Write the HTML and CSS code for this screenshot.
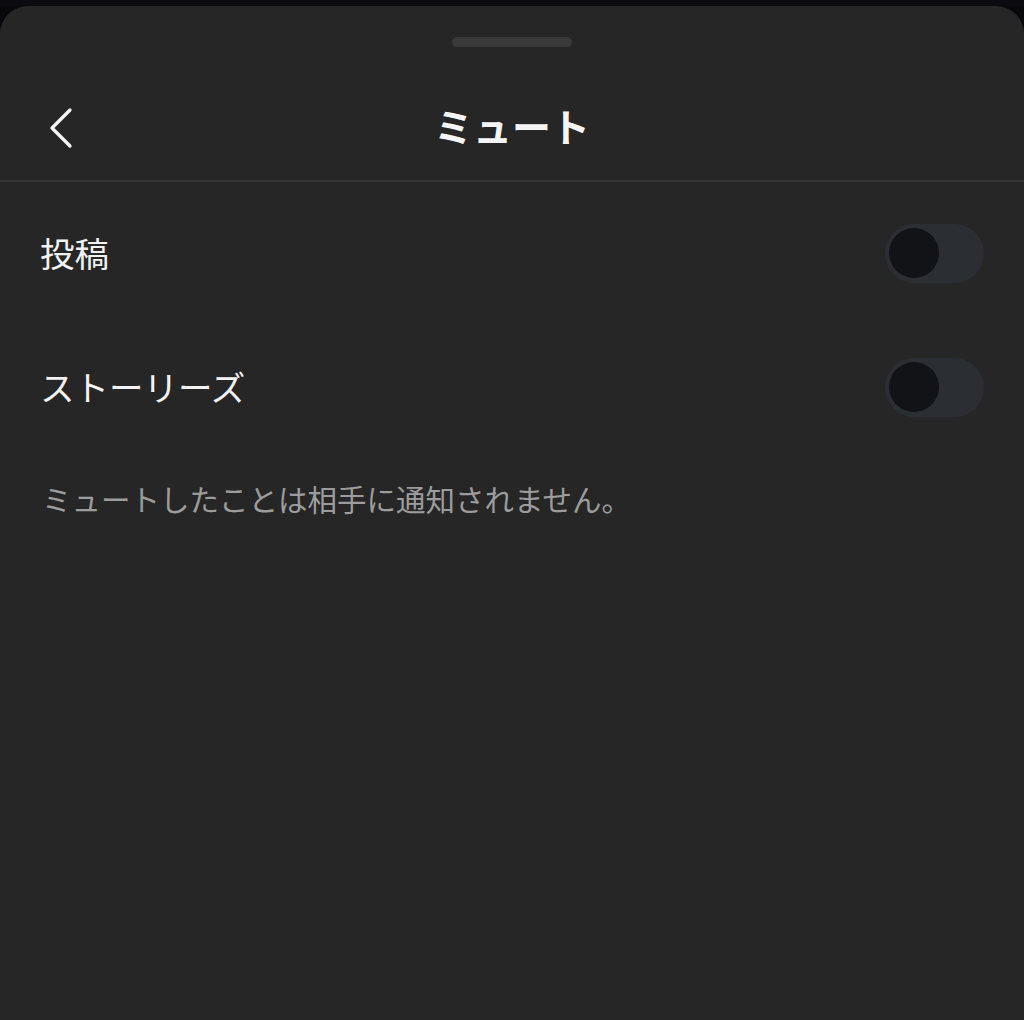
FILE: index.html
```html
<!DOCTYPE html>
<html lang="ja">
<head>
<meta charset="utf-8">
<link rel="stylesheet" href="styles.css">
</head>
<body>
<div class="backdrop"></div>
<div class="sheet">
  <div class="handle"></div>
  <header class="header">
    <button class="back" aria-label="戻る">
      <svg width="26" height="42" viewBox="0 0 26 42"><polyline points="22,3 4,21 22,39" fill="none" stroke="#f5f5f5" stroke-width="3.3" stroke-linecap="round" stroke-linejoin="round"/></svg>
    </button>
    <h1 class="title">ミュート</h1>
  </header>
  <div class="list">
    <div class="row">
      <span class="label">投稿</span>
      <span class="toggle"><span class="knob"></span></span>
    </div>
    <div class="row">
      <span class="label">ストーリーズ</span>
      <span class="toggle"><span class="knob"></span></span>
    </div>
  </div>
  <p class="note">ミュートしたことは相手に通知されません。</p>
</div>
</body>
</html>
```
FILE: styles.css
```css
html, body {
  margin: 0;
  padding: 0;
}
body {
  background: #08080b;
  font-family: "Noto Sans CJK JP", "Noto Sans", sans-serif;
  width: 1024px;
  height: 1020px;
  overflow: hidden;
}
.backdrop {
  height: 6px;
  background: #0b0b0f;
}
.sheet {
  background: #262626;
  border-radius: 28px 28px 0 0;
  height: 1014px;
  display: flex;
  flex-direction: column;
}
.handle {
  width: 120px;
  height: 10px;
  border-radius: 5px;
  background: #3a3a3a;
  margin: 31px auto 0;
}
.header {
  position: relative;
  height: 133px;
  display: flex;
  align-items: center;
  justify-content: center;
  border-bottom: 2px solid #353535;
}
.back {
  position: absolute;
  left: 48px;
  top: 60px;
  background: none;
  border: 0;
  padding: 0;
  display: flex;
}
.title {
  margin: 0;
  margin-top: 22px;
  font-size: 39px;
  font-weight: 700;
  color: #f5f5f5;
  letter-spacing: 0;
}
.list {
  padding-top: 4px;
}
.row {
  height: 134px;
  display: flex;
  align-items: center;
  justify-content: space-between;
  padding: 0 40px 0 40px;
}
.label {
  font-size: 34.5px;
  color: #f2f2f2;
  margin-top: -2px;
}
.toggle {
  width: 99px;
  height: 59px;
  border-radius: 30px;
  background: #2b2e33;
  display: flex;
  align-items: center;
  padding-left: 4px;
  box-sizing: border-box;
}
.knob {
  width: 50px;
  height: 50px;
  border-radius: 50%;
  background: #121317;
}
.note {
  margin: 24px 0 0 42px;
  font-size: 29.5px;
  line-height: 40px;
  color: #9c9c9c;
}
```
